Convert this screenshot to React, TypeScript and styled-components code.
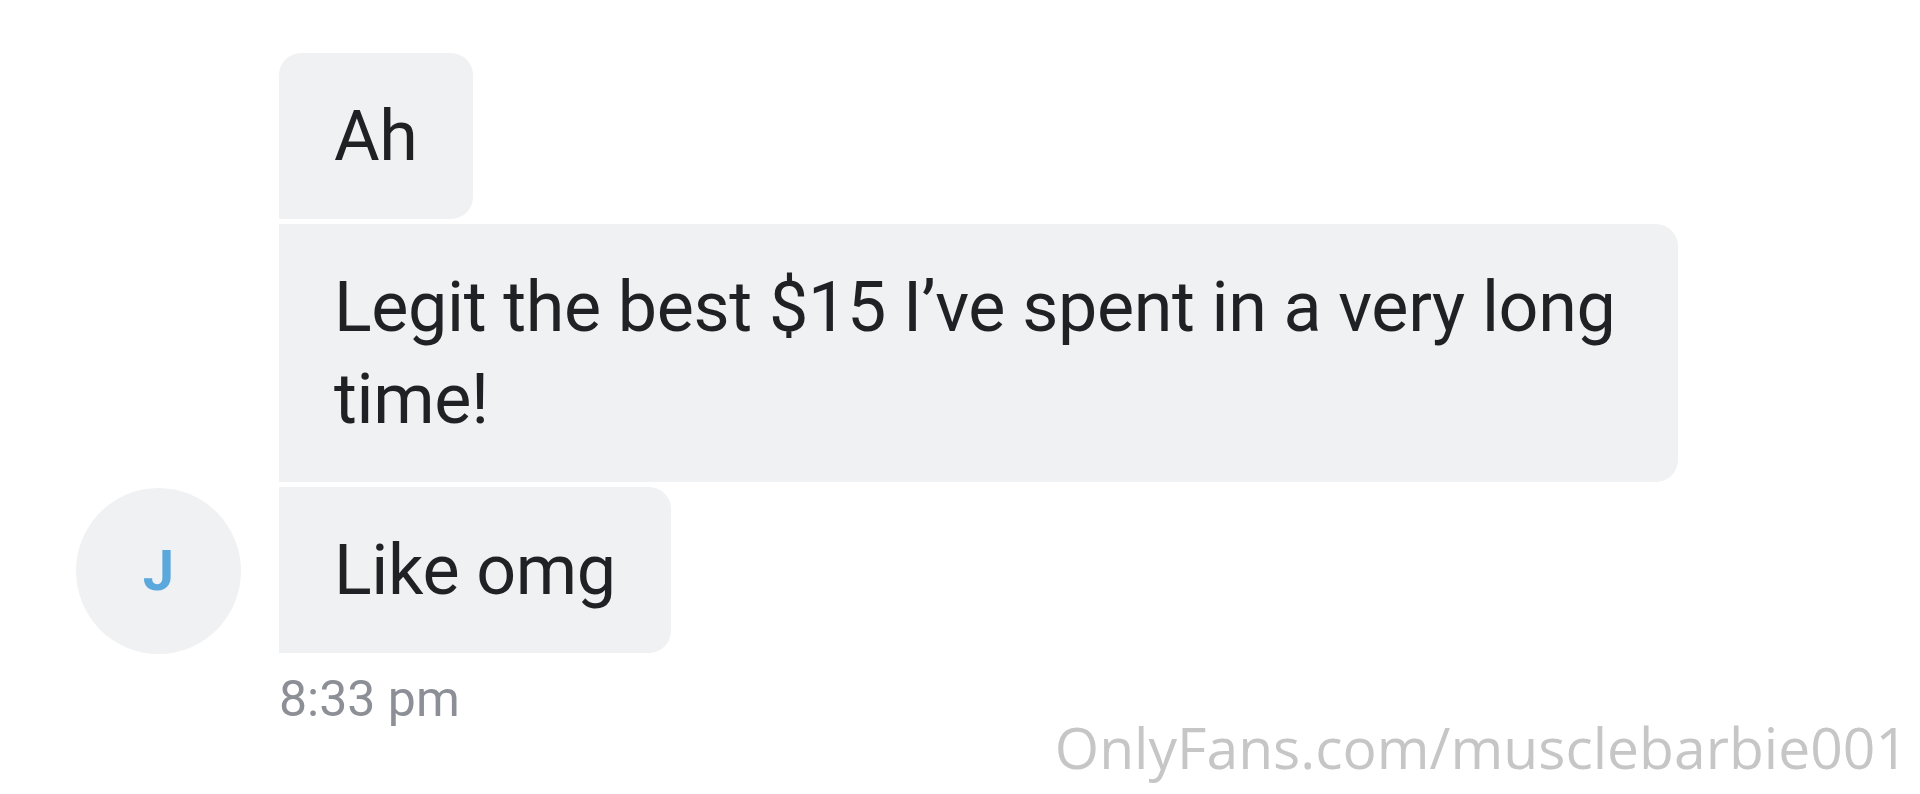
import React from "react";
import styled, { createGlobalStyle } from "styled-components";

const Global = createGlobalStyle`
  html, body {
    margin: 0;
    padding: 0;
    background: #ffffff;
  }
  body {
    font-family: Roboto, "Liberation Sans", Arial, sans-serif;
    -webkit-font-smoothing: antialiased;
  }
`;

const Page = styled.div`
  position: relative;
  width: 1920px;
  height: 794px;
  box-sizing: border-box;
  padding: 53px 0 0 76px;
  overflow: hidden;
  background: #ffffff;
`;

const Thread = styled.div`
  display: grid;
  grid-template-columns: 165px 1fr;
  column-gap: 38px;
  align-items: start;
`;

const AvatarCol = styled.div`
  grid-column: 1;
  grid-row: 1;
  align-self: stretch;
  display: flex;
  flex-direction: column;
  justify-content: flex-end;
  padding-bottom: 74px;
`;

const Avatar = styled.div`
  width: 165px;
  height: 166px;
  border-radius: 50%;
  background: #f0f1f3;
  display: flex;
  align-items: center;
  justify-content: center;
  color: #5aa8dc;
  font-family: Roboto, "Liberation Sans", Arial, sans-serif;
  font-weight: 700;
  font-size: 56px;
  line-height: 1;
`;

const Column = styled.div`
  grid-column: 2;
  grid-row: 1;
  display: flex;
  flex-direction: column;
  align-items: flex-start;
  gap: 5px;
`;

const Bubble = styled.div<{ $first?: boolean }>`
  box-sizing: border-box;
  max-width: 1399px;
  padding: 37px 55px;
  background: #f0f1f3;
  color: #1f2124;
  font-family: Roboto, "Liberation Sans", Arial, sans-serif;
  font-size: 70px;
  line-height: 92px;
  letter-spacing: -0.35px;
  border-radius: ${(p) => (p.$first ? "22px" : "0")} 22px 22px 0;
`;

const Time = styled.div`
  margin-top: 12px;
  color: #8c9096;
  font-family: Roboto, "Liberation Sans", Arial, sans-serif;
  font-size: 50px;
  line-height: 58px;
`;

const Watermark = styled.div`
  position: absolute;
  right: 12px;
  top: 719px;
  color: #c6c6c6;
  font-family: "Open Sans", "Liberation Sans", sans-serif;
  font-size: 57px;
  line-height: 1;
  white-space: nowrap;
`;

export default function App() {
  return (
    <>
      <Global />
      <Page>
        <Thread>
          <AvatarCol>
            <Avatar>J</Avatar>
          </AvatarCol>
          <Column>
            <Bubble $first>Ah</Bubble>
            <Bubble>Legit the best $15 I’ve spent in a very long time!</Bubble>
            <Bubble>Like omg</Bubble>
            <Time>8:33 pm</Time>
          </Column>
        </Thread>
        <Watermark>OnlyFans.com/musclebarbie001</Watermark>
      </Page>
    </>
  );
}
